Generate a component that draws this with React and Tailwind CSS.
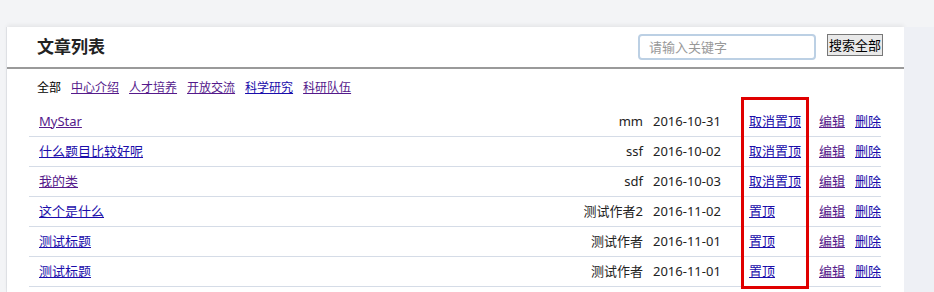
const tabs = [
  { name: "中心介绍", visited: true },
  { name: "人才培养", visited: true },
  { name: "开放交流", visited: true },
  { name: "科学研究", visited: false },
  { name: "科研队伍", visited: true },
];

const articles = [
  { title: "MyStar", author: "mm", date: "2016-10-31", top: true, visited: true },
  { title: "什么题目比较好呢", author: "ssf", date: "2016-10-02", top: true, visited: false },
  { title: "我的类", author: "sdf", date: "2016-10-03", top: true, visited: true },
  { title: "这个是什么", author: "测试作者2", date: "2016-11-02", top: false, visited: false },
  { title: "测试标题", author: "测试作者", date: "2016-11-01", top: false, visited: false },
  { title: "测试标题", author: "测试作者", date: "2016-11-01", top: false, visited: false },
];

const linkBlue = "text-[#1a0dab] underline";
const linkPurple = "text-[#551a8b] underline";

export default function App() {
  return (
    <div
      className="flex min-h-screen bg-[#f3f4f6] pt-[27px]"
      style={{ fontFamily: '"Noto Sans", "Noto Sans CJK SC", sans-serif' }}
    >
      {/* Left gutter */}
      <div className="w-[7px] border-r border-[#e4e6ea] bg-[#f3f4f6]" />

      {/* Card */}
      <div className="w-[897px] bg-white shadow-[0_-2px_4px_rgba(0,0,0,0.06)]">
        {/* Header */}
        <div className="flex h-[42px] items-center border-b-2 border-[#9a9a9a] pl-[30px] pr-[21px]">
          <h1 className="flex-1 text-[17px] font-bold text-[#222]">文章列表</h1>
          <input
            placeholder="请输入关键字"
            className="h-[26px] w-[178px] rounded-[4px] border-2 border-[#bcd0e4] px-[9px] text-[13px] text-[#333] outline-none placeholder:text-[#999]"
          />
          <button className="ml-[11px] mb-[4px] h-[22px] w-[56px] border border-[#777] bg-[#e9e9e9] text-[13px] leading-none text-black">
            搜索全部
          </button>
        </div>

        {/* Tabs */}
        <div className="flex h-[38px] items-center gap-[10px] pl-[30px] text-[12px]">
          <span className="text-black">全部</span>
          {tabs.map((t) => (
            <a key={t.name} href="#" className={t.visited ? linkPurple : linkBlue}>
              {t.name}
            </a>
          ))}
        </div>

        {/* List */}
        <div className="relative ml-[22px] w-[852px] text-[13px]">
          {articles.map((a, i) => (
            <div
              key={i}
              className="grid h-[30px] grid-cols-[1fr_auto_96px_70px_36px_26px] items-center border-b border-[#d5dce7]"
            >
              <a href="#" className={`pl-[10px] ${a.visited ? linkPurple : linkBlue}`}>
                {a.title}
              </a>
              <span className="pr-[10px] text-right text-[#222]">{a.author}</span>
              <span className="text-[#222]">{a.date}</span>
              <a href="#" className={linkBlue}>
                {a.top ? "取消置顶" : "置顶"}
              </a>
              <a href="#" className={linkPurple}>
                编辑
              </a>
              <a href="#" className={linkBlue}>
                删除
              </a>
            </div>
          ))}

          {/* Red highlight box */}
          <div className="pointer-events-none absolute left-[712px] top-[-10px] h-[192px] w-[68px] border-[3px] border-[#e00000]" />
        </div>
      </div>

      {/* Right area */}
      <div className="flex-1 bg-[#eef0f5]" />
    </div>
  );
}
